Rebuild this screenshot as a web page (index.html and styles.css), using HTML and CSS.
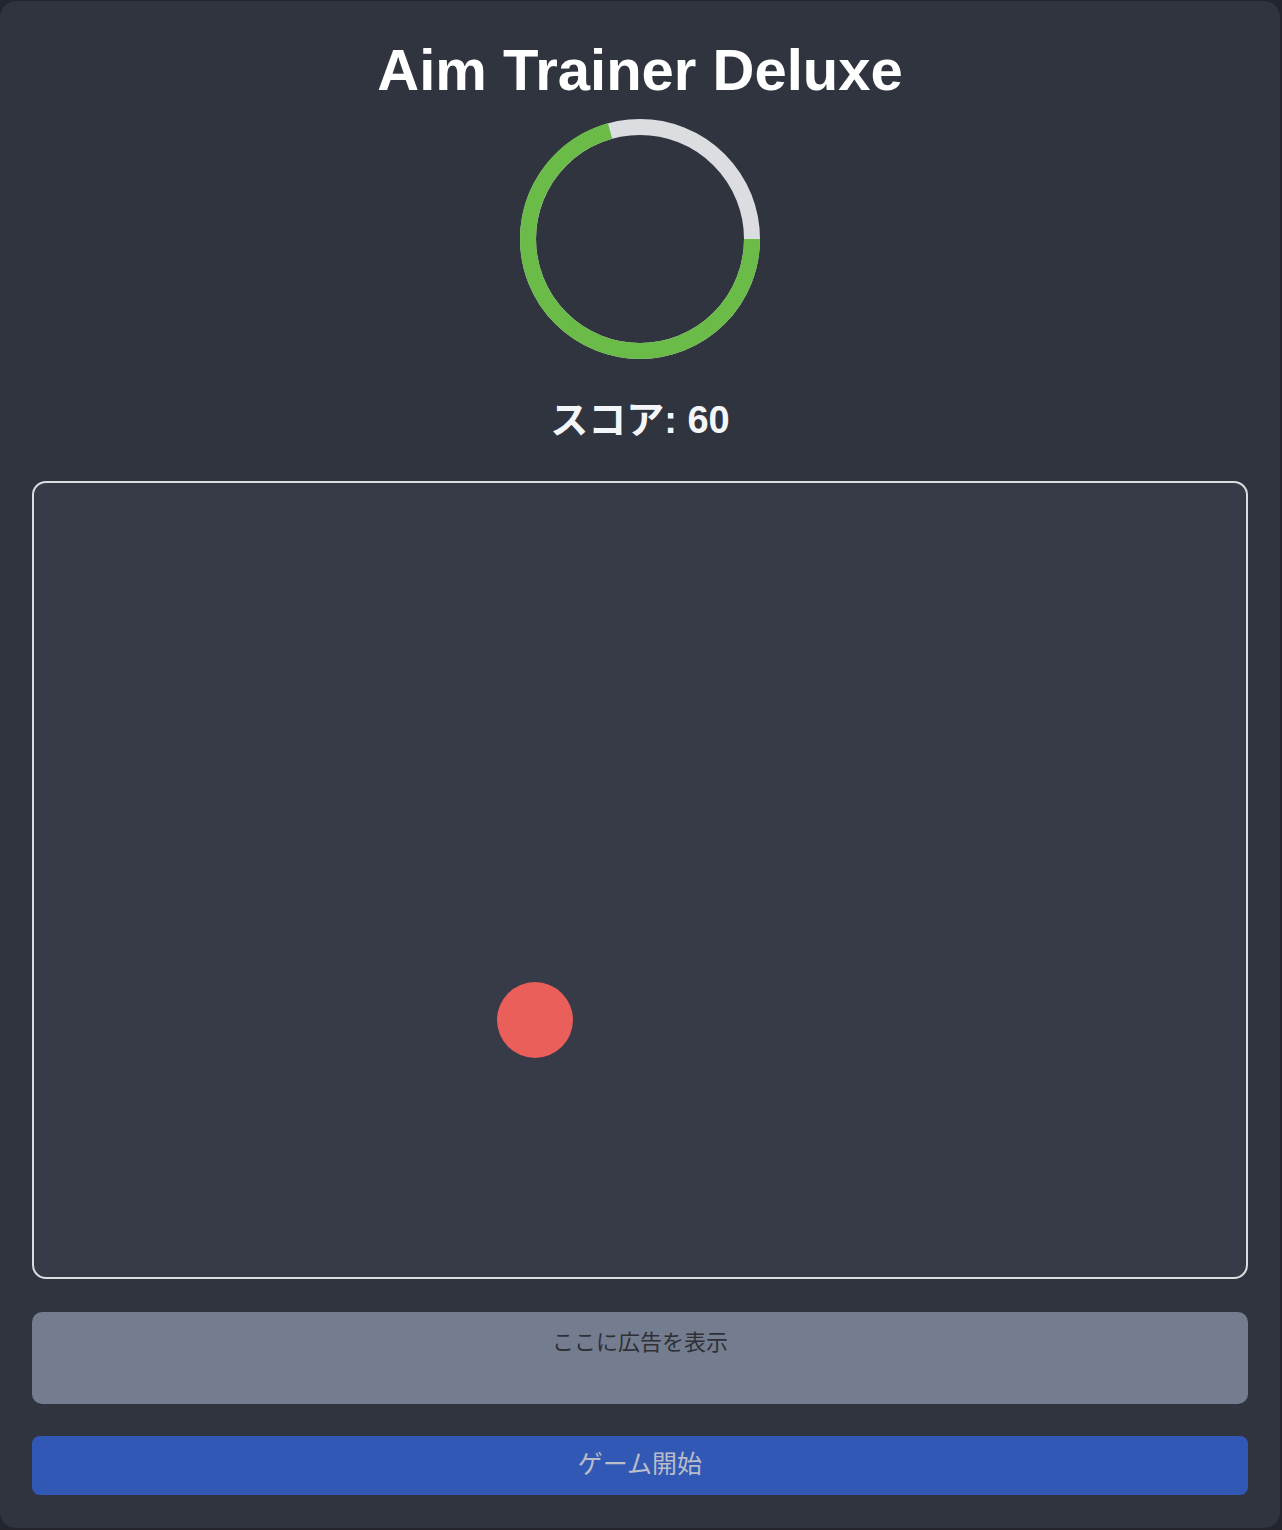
FILE: index.html
```html
<!DOCTYPE html>
<html lang="ja">
<head>
<meta charset="utf-8">
<title>Aim Trainer Deluxe</title>
<link rel="stylesheet" href="styles.css">
</head>
<body>
<div class="app">
  <h1 class="title">Aim Trainer Deluxe</h1>
  <svg class="timer" width="240" height="240" viewBox="0 0 240 240">
    <circle cx="120" cy="120" r="112" fill="none" stroke="#dcdde1" stroke-width="16"/>
    <circle cx="120" cy="120" r="112" fill="none" stroke="#6abb48" stroke-width="16" stroke-dasharray="497 800"/>
  </svg>
  <div class="score">スコア: 60</div>
  <div class="game-area">
    <div class="target" style="left: 463px; top: 499px;"></div>
  </div>
  <div class="ad">ここに広告を表示</div>
  <button class="start">ゲーム開始</button>
</div>
</body>
</html>
```
FILE: styles.css
```css
html, body {
  margin: 0;
  padding: 0;
}
body {
  background: #22252b;
  font-family: "Liberation Sans", "Noto Sans CJK JP", sans-serif;
  padding-top: 1px;
}
.app {
  width: 1280px;
  height: 1527px;
  box-sizing: border-box;
  background: #2f343f;
  border-radius: 16px;
  padding: 39px 32px 32px;
  display: flex;
  flex-direction: column;
  align-items: center;
}
.title {
  margin: 0;
  font-size: 58px;
  line-height: 60px;
  font-weight: bold;
  color: #ffffff;
}
.timer {
  display: block;
  margin-top: 19px;
}
.score {
  margin-top: 39px;
  font-size: 38px;
  line-height: 44px;
  font-weight: bold;
  color: #f5f6fa;
}
.game-area {
  position: relative;
  margin-top: 39px;
  width: 100%;
  height: 798px;
  box-sizing: border-box;
  border: 2px solid #dcdde1;
  border-radius: 14px;
  background: #373a47;
}
.target {
  position: absolute;
  width: 76px;
  height: 76px;
  border-radius: 50%;
  background: #eb5f5a;
}
.ad {
  margin-top: 33px;
  width: 100%;
  height: 92px;
  box-sizing: border-box;
  background: #737d8f;
  border-radius: 10px;
  padding-top: 17px;
  text-align: center;
  font-size: 22px;
  line-height: 28px;
  color: #2f3036;
}
.start {
  margin-top: 32px;
  width: 100%;
  height: 59px;
  border: none;
  border-radius: 8px;
  background: #3158b5;
  color: #b9bdc7;
  font-family: "Liberation Sans", "Noto Sans CJK JP", sans-serif;
  font-size: 25px;
  line-height: 30px;
  padding: 0 0 4px;
}
```
